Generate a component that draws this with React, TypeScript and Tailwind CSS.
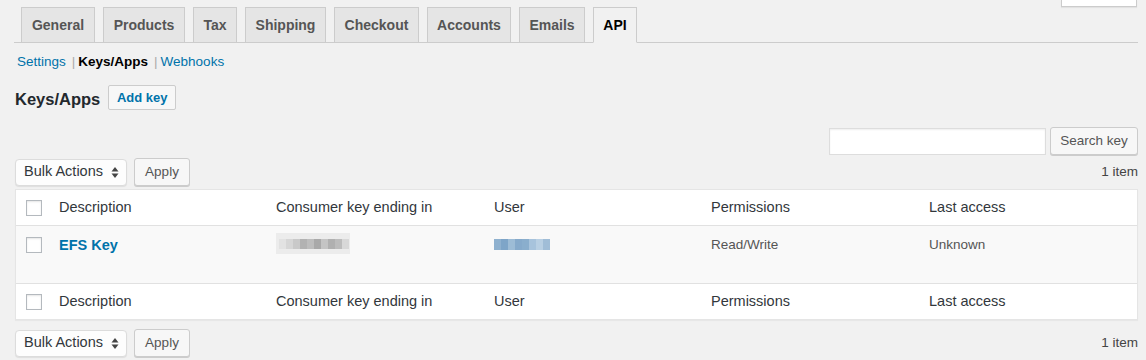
import React from "react";

const tabs: [string, number][] = [
  ["General", 74],
  ["Products", 82],
  ["Tax", 44],
  ["Shipping", 81],
  ["Checkout", 85],
  ["Accounts", 84],
  ["Emails", 66],
  ["API", 44],
];

function Checkbox() {
  return (
    <div className="w-4 h-4 bg-white border border-[#b4b9be] shadow-[inset_0_1px_2px_rgba(0,0,0,0.1)]" />
  );
}

function BulkRow() {
  return (
    <div className="flex items-center justify-between h-[28px]">
      <div className="flex items-center gap-[7px]">
        <div className="w-[112px] h-[27px] flex items-center justify-between pl-[8px] pr-[7px] bg-[#fdfdfd] border border-[#dcdcdc] rounded-[4px] shadow-[0_1px_1px_rgba(0,0,0,0.08)] text-[14.5px] text-[#32373c]">
          <span>Bulk Actions</span>
          <svg width="8" height="13" viewBox="0 0 8 13">
            <path d="M4 1 L7.5 5.5 L0.5 5.5 Z" fill="#444" />
            <path d="M4 12 L7.5 7.5 L0.5 7.5 Z" fill="#444" />
          </svg>
        </div>
        <div className="w-[56px] h-[28px] flex items-center justify-center bg-[#f7f7f7] border border-[#cccccc] rounded-[3px] shadow-[0_1px_0_#cccccc] text-[13.5px] text-[#555]">
          Apply
        </div>
      </div>
      <span className="text-[13.5px] text-[#444]">1 item</span>
    </div>
  );
}

function Blur({ colors, h }: { colors: string[]; h: number }) {
  return (
    <div className="flex blur-[0.6px]" style={{ height: h }}>
      {colors.map((c, i) => (
        <div key={i} className="w-[7px] h-full" style={{ background: c }} />
      ))}
    </div>
  );
}

export default function App() {
  const grid = "grid grid-cols-[33px_217px_218px_217px_218px_1fr]";
  const headerCells = (
    <>
      <div className="pl-[10px] flex items-center">
        <Checkbox />
      </div>
      <div className="pl-[10px]">Description</div>
      <div className="pl-[10px]">Consumer key ending in</div>
      <div className="pl-[10px]">User</div>
      <div className="pl-[10px]">Permissions</div>
      <div className="pl-[10px]">Last access</div>
    </>
  );
  return (
    <div
      className="w-[1146px] h-[360px] overflow-hidden bg-[#f1f1f1] pl-[14px] pr-[8px]"
      style={{ fontFamily: '"Liberation Sans", Arial, sans-serif' }}
    >
      {/* top strip with clipped help tab */}
      <div className="h-[7px] flex justify-end pr-[1px]">
        <div className="w-[76px] h-[7px] bg-white border border-t-0 border-[#cccccc] shadow-[0_1px_1px_rgba(0,0,0,0.06)]" />
      </div>

      {/* tabs */}
      <div className="flex border-b border-[#cccccc] h-[36px] pl-[7px] gap-[8px]">
        {tabs.map(([t, w]) => {
          const active = t === "API";
          return (
            <div
              key={t}
              style={{ width: w }}
              className={
                active
                  ? "h-[36px] flex items-center justify-center border border-[#cccccc] border-b-[#f1f1f1] bg-[#f1f1f1] text-[14px] font-bold text-black"
                  : "h-[36px] flex items-center justify-center border border-[#cccccc] bg-[#e5e5e5] text-[14px] font-bold text-[#555]"
              }
            >
              {t}
            </div>
          );
        })}
      </div>

      {/* subsubsub */}
      <div className="mt-[6px] h-[26px] flex items-center pl-[3px] text-[13.5px]">
        <span className="text-[#0073aa]">Settings</span>
        <span className="text-[#aaa] ml-[6px] mr-[3px]">|</span>
        <span className="text-black font-bold">Keys/Apps</span>
        <span className="text-[#aaa] ml-[6px] mr-[3px]">|</span>
        <span className="text-[#0073aa]">Webhooks</span>
      </div>

      {/* heading */}
      <div className="mt-[10px] h-[25px] flex items-center pl-[1px]">
        <span className="text-[16.5px] font-bold text-[#23282d] mt-[3px]">Keys/Apps</span>
        <div className="ml-[8px] w-[68px] h-[25px] flex items-center justify-center bg-[#f7f7f7] border border-[#cccccc] rounded-[2px] text-[13px] font-bold text-[#0073aa]">
          Add key
        </div>
      </div>

      {/* search */}
      <div className="mt-[17px] flex justify-end items-center gap-[4px]">
        <div className="w-[217px] h-[27px] bg-white border border-[#dddddd] shadow-[inset_0_1px_2px_rgba(0,0,0,0.07)]" />
        <div className="w-[88px] h-[28px] flex items-center justify-center bg-[#f7f7f7] border border-[#cccccc] rounded-[3px] shadow-[0_1px_0_#cccccc] text-[13.5px] text-[#555]">
          Search key
        </div>
      </div>

      <div className="mt-[3px] pl-[1px]">
        <BulkRow />
      </div>

      {/* table */}
      <div className="mt-[3px] ml-[1px] bg-white border border-[#e5e5e5] shadow-[0_1px_1px_rgba(0,0,0,0.04)] text-[#32373c]">
        <div className={`${grid} h-[36px] items-center border-b border-[#e1e1e1] text-[14.5px]`}>{headerCells}</div>
        <div className={`${grid} h-[57px] bg-[#f9f9f9] items-start pt-[10px]`}>
          <div className="pl-[10px] pt-[1px]">
            <Checkbox />
          </div>
          <div className="pl-[10px] text-[14.5px] font-bold text-[#0073aa] leading-[18px]">EFS Key</div>
          <div className="pl-[10px] -mt-[3px]">
            <div className="w-[74px] h-[21px] bg-[#ececec] flex items-center px-[3px]">
              <Blur
                h={10}
                colors={["#e2e2e2", "#d6d6d6", "#c9c9c9", "#b2b2b2", "#bdbdbd", "#a9a9a9", "#c4c4c4", "#b0b0b0", "#bcbcbc", "#d8d8d8"]}
              />
            </div>
          </div>
          <div className="pl-[10px] pt-[3px]">
            <Blur
              h={11}
              colors={["#8fb1cf", "#7ea5c8", "#9dbcd6", "#86aacb", "#8aaecd", "#a7c3dc", "#b8cfe3", "#a0bdd7"]}
            />
          </div>
          <div className="pl-[10px] text-[13.5px] text-[#555] leading-[18px]">Read/Write</div>
          <div className="pl-[10px] text-[13.5px] text-[#555] leading-[18px]">Unknown</div>
        </div>
        <div className={`${grid} h-[36px] items-center border-t border-[#e1e1e1] text-[14.5px]`}>{headerCells}</div>
      </div>

      <div className="mt-[9px] pl-[1px]">
        <BulkRow />
      </div>
    </div>
  );
}
